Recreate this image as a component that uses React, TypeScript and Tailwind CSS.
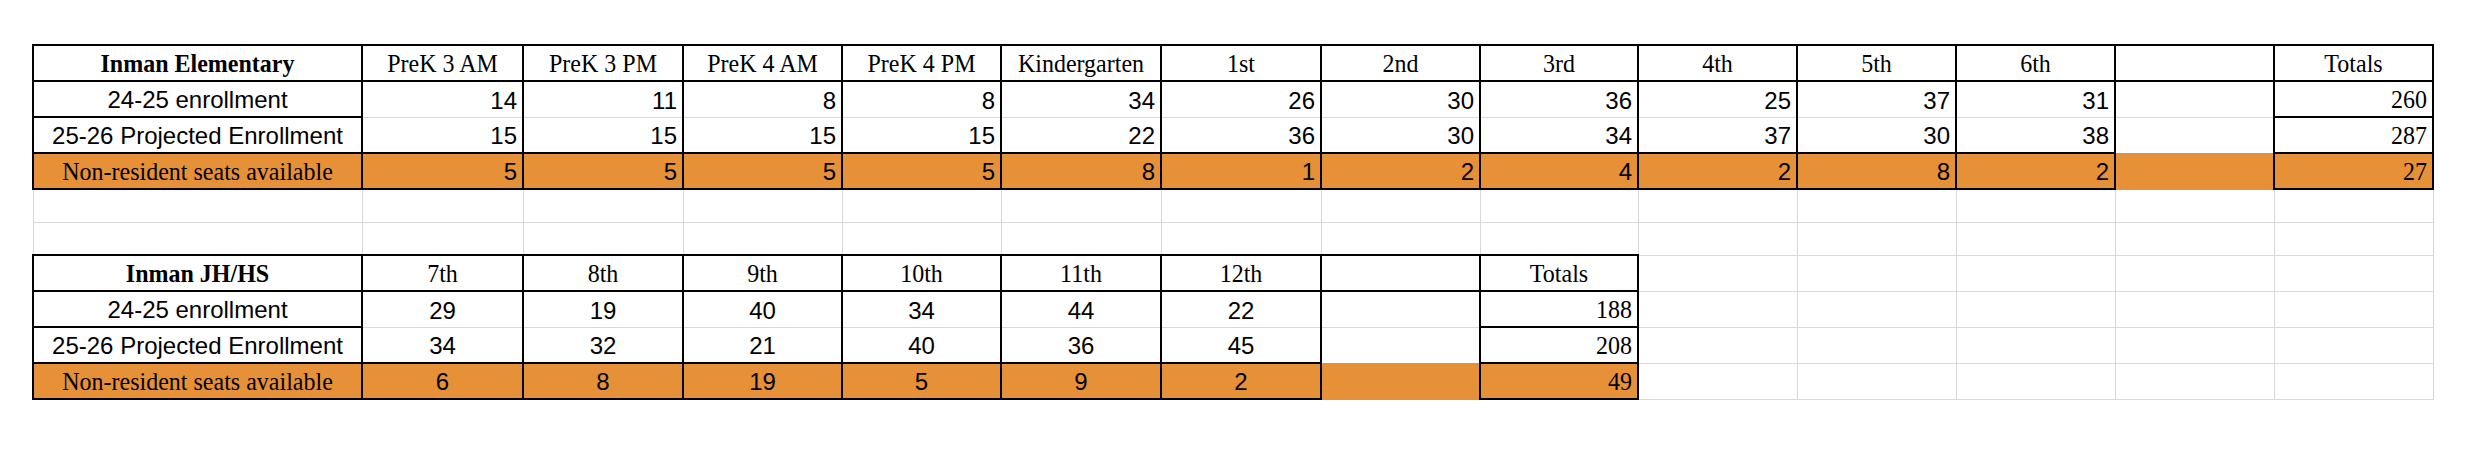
import clsx from "clsx";

type Side = "black" | "gray" | "orange" | "none";

interface ICell {
  text?: string | number;
  serif?: boolean;
  bold?: boolean;
  align?: "center" | "right";
  fill?: boolean;
  t: Side;
  r: Side;
  b: Side;
  l: Side;
}

const TOP: Record<Side, string> = {
  black: "border-t-2 border-t-black",
  gray: "border-t border-t-[#d9d9d9]",
  orange: "border-t border-t-[#e69138]",
  none: "border-t-0",
};
const RIGHT: Record<Side, string> = {
  black: "border-r-2 border-r-black",
  gray: "border-r border-r-[#d9d9d9]",
  orange: "border-r border-r-[#e69138]",
  none: "border-r-0",
};
const BOTTOM: Record<Side, string> = {
  black: "border-b-2 border-b-black",
  gray: "border-b border-b-[#d9d9d9]",
  orange: "border-b border-b-[#e69138]",
  none: "border-b-0",
};
const LEFT: Record<Side, string> = {
  black: "border-l-2 border-l-black",
  gray: "border-l border-l-[#d9d9d9]",
  orange: "border-l border-l-[#e69138]",
  none: "border-l-0",
};

const WIDTHS = [
  "w-[329px]",
  "w-[161px]",
  "w-[160px]",
  "w-[159px]",
  "w-[159px]",
  "w-[160px]",
  "w-[160px]",
  "w-[159px]",
  "w-[158px]",
  "w-[159px]",
  "w-[159px]",
  "w-[159px]",
  "w-[159px]",
  "w-[159px]",
];

const boxed = { t: "black", r: "black", b: "black", l: "black" } as const;
const grid = { t: "gray", r: "gray", b: "gray", l: "gray" } as const;

interface IBlock {
  title: string;
  grades: string[];
  numAlign: "center" | "right";
  rows: { label: string; values: number[]; total: number }[];
}

const buildBlock = ({ title, grades, numAlign, rows }: IBlock): ICell[][] => {
  const trailing = 14 - grades.length - 3;
  const pad = (): ICell[] => Array.from({ length: trailing }, () => ({ ...grid }));

  const header: ICell[] = [
    { text: title, serif: true, bold: true, align: "center", ...boxed },
    ...grades.map((g) => ({ text: g, serif: true, align: "center" as const, ...boxed })),
    { ...boxed },
    { text: "Totals", serif: true, align: "center", ...boxed },
    ...pad(),
  ];

  const body = rows.map((row, i) => {
    const fill = i === 2;
    const values: ICell[] = row.values.map((v) => ({
      text: v,
      align: numAlign,
      fill,
      t: i === 1 ? "gray" : "black",
      b: i === 0 ? "gray" : "black",
      l: "black",
      r: "black",
    }));
    // the empty column before Totals has no box of its own
    const blank: ICell =
      i === 0
        ? { t: "black", b: "gray", l: "black", r: "black" }
        : i === 1
          ? { t: "gray", b: "orange", l: "black", r: "black" }
          : { fill: true, t: "orange", b: "orange", l: "none", r: "none" };

    return [
      { text: row.label, serif: fill, align: "center", fill, ...boxed } as ICell,
      ...values,
      blank,
      { text: row.total, serif: true, align: "right", fill, ...boxed } as ICell,
      ...pad(),
    ];
  });

  return [header, ...body];
};

const elementary = buildBlock({
  title: "Inman Elementary",
  grades: [
    "PreK 3 AM",
    "PreK 3 PM",
    "PreK 4 AM",
    "PreK 4 PM",
    "Kindergarten",
    "1st",
    "2nd",
    "3rd",
    "4th",
    "5th",
    "6th",
  ],
  numAlign: "right",
  rows: [
    { label: "24-25 enrollment", values: [14, 11, 8, 8, 34, 26, 30, 36, 25, 37, 31], total: 260 },
    { label: "25-26 Projected Enrollment", values: [15, 15, 15, 15, 22, 36, 30, 34, 37, 30, 38], total: 287 },
    { label: "Non-resident seats available", values: [5, 5, 5, 5, 8, 1, 2, 4, 2, 8, 2], total: 27 },
  ],
});

const highSchool = buildBlock({
  title: "Inman JH/HS",
  grades: ["7th", "8th", "9th", "10th", "11th", "12th"],
  numAlign: "center",
  rows: [
    { label: "24-25 enrollment", values: [29, 19, 40, 34, 44, 22], total: 188 },
    { label: "25-26 Projected Enrollment", values: [34, 32, 21, 40, 36, 45], total: 208 },
    { label: "Non-resident seats available", values: [6, 8, 19, 5, 9, 2], total: 49 },
  ],
});

const emptyRow = (): ICell[] => Array.from({ length: 14 }, () => ({ ...grid }));

const Cell: React.FC<{ cell: ICell }> = ({ cell }) => (
  <td
    className={clsx(
      "p-0 pb-[4px] align-bottom whitespace-nowrap text-[24px] leading-none text-black",
      cell.serif ? "font-['Liberation_Serif',serif]" : "font-['Liberation_Sans',Arial,sans-serif]",
      cell.bold && "font-bold",
      cell.align === "right" ? "text-right pr-[5px]" : "text-center",
      cell.fill && "bg-[#e69138]",
      TOP[cell.t],
      RIGHT[cell.r],
      BOTTOM[cell.b],
      LEFT[cell.l],
    )}
  >
    {cell.serif ? (
      <span className="inline-block scale-y-[1.06] origin-[50%_84%]">{cell.text}</span>
    ) : (
      cell.text
    )}
  </td>
);

export default function App() {
  const rows = [
    { h: "h-[36px]", cells: elementary[0] },
    { h: "h-[36px]", cells: elementary[1] },
    { h: "h-[36px]", cells: elementary[2] },
    { h: "h-[36px]", cells: elementary[3] },
    { h: "h-[33px]", cells: emptyRow() },
    { h: "h-[33px]", cells: emptyRow() },
    { h: "h-[36px]", cells: highSchool[0] },
    { h: "h-[36px]", cells: highSchool[1] },
    { h: "h-[36px]", cells: highSchool[2] },
    { h: "h-[36px]", cells: highSchool[3] },
  ];

  return (
    <div className="w-[2484px] h-[466px] bg-white pt-[44px] pl-[32px]">
      <table className="table-fixed border-collapse">
        <colgroup>
          {WIDTHS.map((w, i) => (
            <col key={i} className={w} />
          ))}
        </colgroup>
        <tbody>
          {rows.map((row, i) => (
            <tr key={i} className={row.h}>
              {row.cells.map((cell, j) => (
                <Cell key={j} cell={cell} />
              ))}
            </tr>
          ))}
        </tbody>
      </table>
    </div>
  );
}
